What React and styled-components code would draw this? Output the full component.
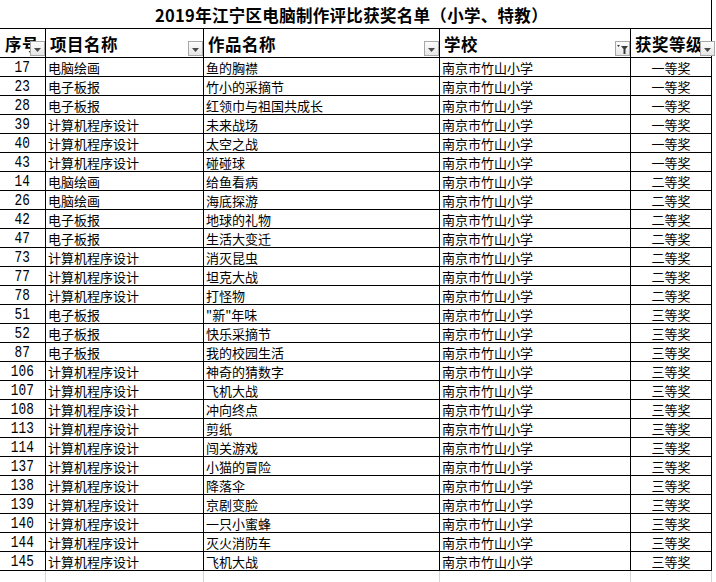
import styled, { createGlobalStyle } from 'styled-components';

const GlobalStyle = createGlobalStyle`
  html, body {
    margin: 0;
    padding: 0;
    background: #fff;
  }
  body {
    font-family: "Noto Sans CJK SC", "Liberation Sans", sans-serif;
    color: #000;
  }
`;

const rows = [
  ['17', '电脑绘画', '鱼的胸襟', '一等奖'],
  ['23', '电子板报', '竹小的采摘节', '一等奖'],
  ['28', '电子板报', '红领巾与祖国共成长', '一等奖'],
  ['39', '计算机程序设计', '未来战场', '一等奖'],
  ['40', '计算机程序设计', '太空之战', '一等奖'],
  ['43', '计算机程序设计', '碰碰球', '一等奖'],
  ['14', '电脑绘画', '给鱼看病', '二等奖'],
  ['26', '电脑绘画', '海底探游', '二等奖'],
  ['42', '电子板报', '地球的礼物', '二等奖'],
  ['47', '电子板报', '生活大变迁', '二等奖'],
  ['73', '计算机程序设计', '消灭昆虫', '二等奖'],
  ['77', '计算机程序设计', '坦克大战', '二等奖'],
  ['78', '计算机程序设计', '打怪物', '二等奖'],
  ['51', '电子板报', '"新"年味', '三等奖'],
  ['52', '电子板报', '快乐采摘节', '三等奖'],
  ['87', '电子板报', '我的校园生活', '三等奖'],
  ['106', '计算机程序设计', '神奇的猜数字', '三等奖'],
  ['107', '计算机程序设计', '飞机大战', '三等奖'],
  ['108', '计算机程序设计', '冲向终点', '三等奖'],
  ['113', '计算机程序设计', '剪纸', '三等奖'],
  ['114', '计算机程序设计', '闯关游戏', '三等奖'],
  ['137', '计算机程序设计', '小猫的冒险', '三等奖'],
  ['138', '计算机程序设计', '降落伞', '三等奖'],
  ['139', '计算机程序设计', '京剧变脸', '三等奖'],
  ['140', '计算机程序设计', '一只小蜜蜂', '三等奖'],
  ['144', '计算机程序设计', '灭火消防车', '三等奖'],
  ['145', '计算机程序设计', '飞机大战', '三等奖'],
];

const headers = [
  { label: '序号', filter: 'plain', right: 0, pad: 5 },
  { label: '项目名称', filter: 'plain', right: 0, pad: 4 },
  { label: '作品名称', filter: 'plain', right: 0, pad: 4 },
  { label: '学校', filter: 'funnel', right: 0, pad: 4 },
  { label: '获奖等级', filter: 'plain', right: -4, pad: 4 },
];

const ArrowIcon = () => (
  <svg width="7" height="4" viewBox="0 0 7 4">
    <path d="M0 0 H7 L3.5 4 Z" fill="#4a4a4a" />
  </svg>
);

const FunnelIcon = () => (
  <svg width="11" height="9" viewBox="0 0 11 9">
    <path d="M0 0 H3 L1.5 2 Z" fill="#3a3a3a" />
    <path d="M4 1 H11 L8.5 4 V9 H6.5 V4 Z" fill="#3a3a3a" />
  </svg>
);

export default function App() {
  return (
    <>
      <GlobalStyle />
      <Sheet>
        <Title>2019年江宁区电脑制作评比获奖名单（小学、特教）</Title>
        {headers.map((h) => (
          <HeadCell key={h.label} $pad={h.pad}>
            <HeadText>{h.label}</HeadText>
            <FilterButton $right={h.right}>
              {h.filter === 'funnel' ? <FunnelIcon /> : <ArrowIcon />}
            </FilterButton>
          </HeadCell>
        ))}
        {rows.map((r) => (
          <Row key={r[0]}>
            <NumCell>
              <Digits>{r[0]}</Digits>
            </NumCell>
            <Cell>{r[1]}</Cell>
            <Cell>{r[2]}</Cell>
            <Cell>南京市竹山小学</Cell>
            <Cell $center>{r[3]}</Cell>
          </Row>
        ))}
        <Row>
          {[0, 1, 2, 3, 4].map((i) => (
            <EmptyCell key={i} />
          ))}
        </Row>
      </Sheet>
    </>
  );
}

const Sheet = styled.div`
  display: grid;
  grid-template-columns: 46px 158px 236px 191px 81px;
  width: 712px;
`;

const Title = styled.div`
  grid-column: 1 / -1;
  height: 29px;
  box-sizing: border-box;
  border-right: 1px solid #000;
  border-bottom: 1px solid #000;
  display: flex;
  align-items: center;
  justify-content: center;
  padding: 1px 8px 0 0;
  font-size: 16.5px;
  font-weight: 700;
  letter-spacing: 0.3px;
`;

const HeadCell = styled.div`
  position: relative;
  height: 29px;
  box-sizing: border-box;
  border-right: 1px solid #000;
  border-bottom: 1px solid #000;
  display: flex;
  align-items: flex-end;
  padding: 0 0 4px ${(p) => p.$pad}px;
  white-space: nowrap;
`;

const HeadText = styled.span`
  font-size: 16.5px;
  font-weight: 700;
  line-height: 18px;
  letter-spacing: 0.5px;
`;

const FilterButton = styled.div`
  position: absolute;
  right: ${(p) => p.$right}px;
  bottom: 1px;
  width: 15px;
  height: 15px;
  box-sizing: border-box;
  border: 1px solid #a8a8a8;
  background: linear-gradient(#fdfdfd, #e6e6e6);
  display: flex;
  align-items: center;
  justify-content: center;
  padding-top: 2px;
  z-index: 1;
`;

const Row = styled.div`
  display: contents;
`;

const Cell = styled.div`
  height: 19px;
  box-sizing: border-box;
  border-right: 1px solid #000;
  border-bottom: 1px solid #000;
  padding: 2px 2px 0 2px;
  font-size: 13px;
  line-height: 16px;
  white-space: nowrap;
  overflow: hidden;
  text-align: ${(p) => (p.$center ? 'center' : 'left')};
`;

const NumCell = styled(Cell)`
  display: flex;
  justify-content: center;
  align-items: flex-end;
  padding: 0;
`;

const Digits = styled.span`
  display: inline-block;
  font-family: "Liberation Mono", "DejaVu Sans Mono", monospace;
  font-size: 17px;
  line-height: 17px;
  transform: scaleX(0.75);
`;

const EmptyCell = styled.div`
  height: 20px;
  border-right: 1px solid #d4d4d4;
`;
